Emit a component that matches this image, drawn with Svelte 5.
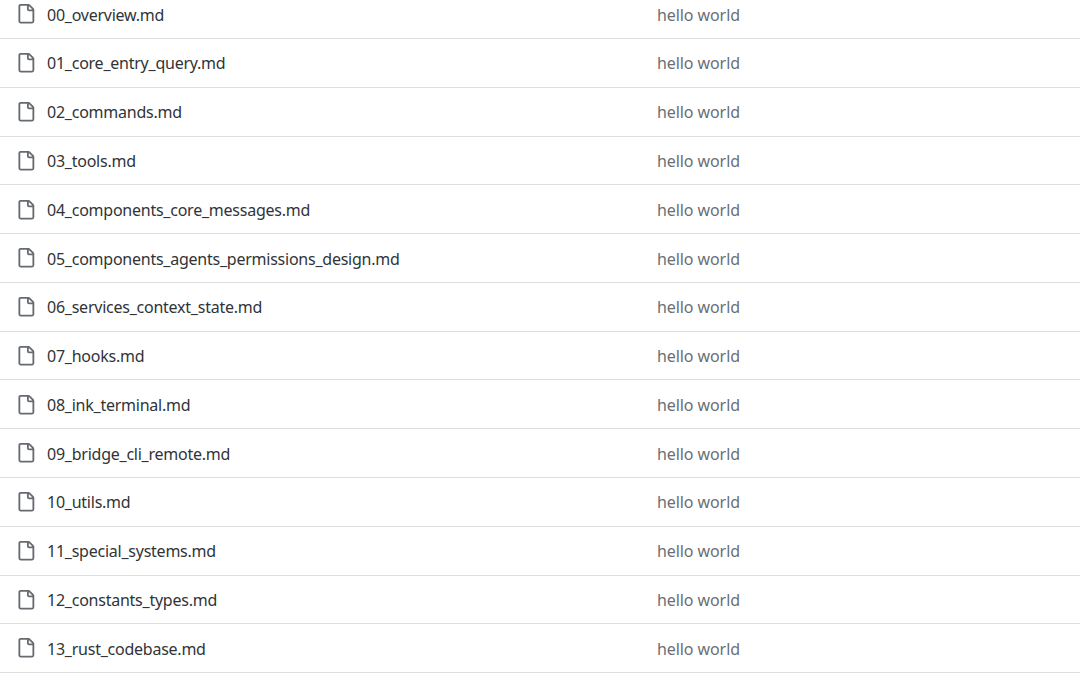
<script>
  const files = [
    '00_overview.md',
    '01_core_entry_query.md',
    '02_commands.md',
    '03_tools.md',
    '04_components_core_messages.md',
    '05_components_agents_permissions_design.md',
    '06_services_context_state.md',
    '07_hooks.md',
    '08_ink_terminal.md',
    '09_bridge_cli_remote.md',
    '10_utils.md',
    '11_special_systems.md',
    '12_constants_types.md',
    '13_rust_codebase.md'
  ];
  const message = 'hello world';
</script>

<div class="files">
  {#each files as name}
    <div class="row">
      <svg class="icon" viewBox="0 0 16 16" aria-hidden="true">
        <path d="M2 1.75C2 .784 2.784 0 3.75 0h6.586c.464 0 .909.184 1.237.513l2.914 2.914c.329.328.513.773.513 1.237v9.586A1.75 1.75 0 0 1 13.25 16h-9.5A1.75 1.75 0 0 1 2 14.25Zm1.75-.25a.25.25 0 0 0-.25.25v12.5c0 .138.112.25.25.25h9.5a.25.25 0 0 0 .25-.25V6h-2.75A1.75 1.75 0 0 1 9 4.25V1.5Zm6.75.062V4.25c0 .138.112.25.25.25h2.688l-.011-.013-2.914-2.914-.013-.011Z" />
      </svg>
      <span class="name">{name}</span>
      <span class="message">{message}</span>
    </div>
  {/each}
</div>

<style>
  :global(body) {
    background: #fff;
    overflow: hidden;
  }
  .files {
    margin-top: -9.7px;
    font-family: "Noto Sans", sans-serif;
    font-size: 16px;
  }
  .row {
    display: grid;
    grid-template-columns: 31px 610px 1fr;
    align-items: center;
    height: 48.77px;
    padding-left: 16px;
    box-sizing: border-box;
    border-bottom: 1px solid #dcdfe2;
  }
  .icon {
    width: 19.5px;
    height: 19.5px;
    overflow: visible;
    fill: #666b72;
  }
  .name,
  .message {
    padding-top: 1px;
  }
  .name {
    color: #303438;
    letter-spacing: -0.24px;
  }
  .message {
    color: #6a6f75;
    letter-spacing: -0.08px;
  }
</style>
